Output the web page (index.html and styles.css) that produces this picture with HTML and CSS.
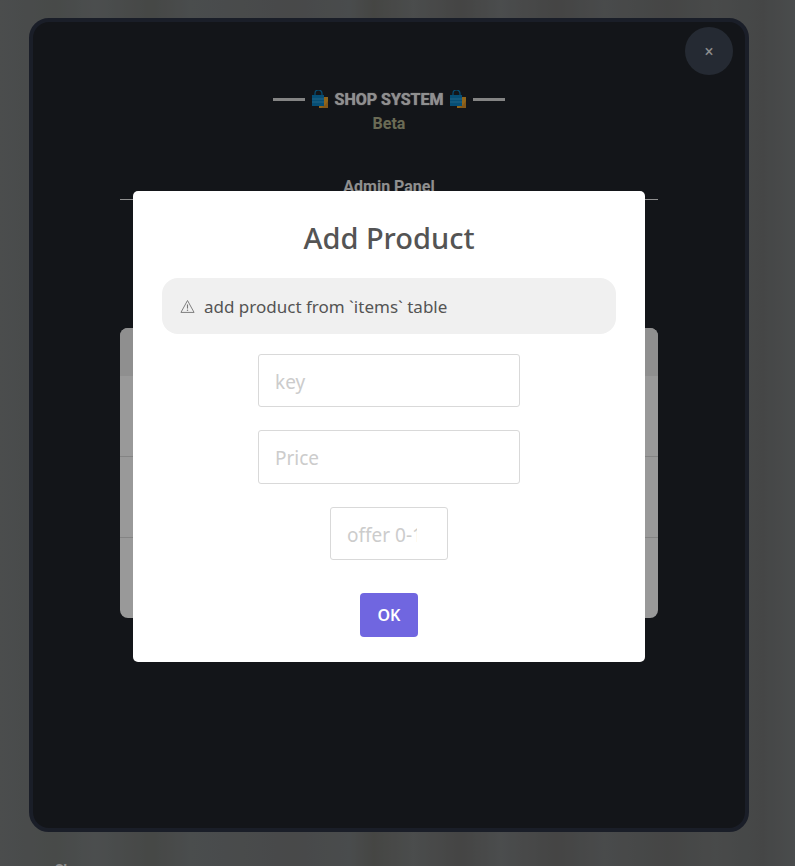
FILE: index.html
```html
<!DOCTYPE html>
<html lang="en">
<head>
  <meta charset="UTF-8" />
  <title>Shop System</title>
  <meta name="viewport" content="width=device-width, initial-scale=1" />
  <link rel="stylesheet" href="styles.css">
</head>
<body>

<div class="panel">
  <button class="close-btn" type="button">×</button>

  <div class="panel-title">
    <span class="dash"></span>
    <svg class="bag" viewBox="0 0 18 18" width="18" height="18">
      <rect x="8" y="7" width="9" height="11" fill="#f0a92e" />
      <path d="M10 18h7v-7l-3 4z" fill="#d9912a" />
      <path d="M4 5V3.5a3.5 3.5 0 0 1 7 0V5" fill="none" stroke="#0a83c4" stroke-width="1.2" />
      <rect x="1" y="5" width="12" height="11" fill="#0a83c4" />
      <path d="M1 9h12M1 12h12" stroke="#3aa6dc" stroke-width="1" />
    </svg>
    <span>SHOP SYSTEM</span>
    <svg class="bag" viewBox="0 0 18 18" width="18" height="18">
      <rect x="8" y="7" width="9" height="11" fill="#f0a92e" />
      <path d="M10 18h7v-7l-3 4z" fill="#d9912a" />
      <path d="M4 5V3.5a3.5 3.5 0 0 1 7 0V5" fill="none" stroke="#0a83c4" stroke-width="1.2" />
      <rect x="1" y="5" width="12" height="11" fill="#0a83c4" />
      <path d="M1 9h12M1 12h12" stroke="#3aa6dc" stroke-width="1" />
    </svg>
    <span class="dash"></span>
  </div>
  <div class="panel-beta">Beta</div>

  <div class="panel-sub">Admin Panel</div>
  <hr class="panel-rule" />

  <div class="table-card">
    <div class="table-head"></div>
    <div class="table-row"></div>
    <div class="table-row"></div>
    <div class="table-row last"></div>
  </div>
</div>

<div class="below">Shop</div>

<div class="overlay">
  <form class="dialog">
    <h2>Add Product</h2>
    <div class="notice">
      <svg class="warn" viewBox="0 0 16 16" width="15" height="15">
        <path d="M8 1.6 15 14.3H1z" fill="none" stroke="#777" stroke-width="1" stroke-linejoin="round" />
        <path d="M8 5.8v4.4" stroke="#777" stroke-width="1.2" />
        <circle cx="8" cy="12" r=".8" fill="#777" />
      </svg>
      <span>add product from `items` table</span>
    </div>
    <input class="field" type="text" placeholder="key" />
    <input class="field" type="text" placeholder="Price" />
    <input class="field small" type="text" placeholder="offer 0-1" />
    <button class="ok-btn" type="button">OK</button>
  </form>
</div>

</body>
</html>
```

FILE: styles.css
```css
html, body {
  height: 100%;
}
body {
  margin: 0;
  height: 866px;
  overflow: hidden;
  position: relative;
  font-family: Roboto, sans-serif;
  background-color: #7b7f80;
  background-image:
    linear-gradient(90deg, #7d8081 0, #787c7a 7%, #7e8283 12%, #757875 19%, #7c8081 24%, #787a7b 37%, #7b7f80 44%, #747571 47%, #7d8080 52%, #737372 58%, #7d8081 63%, #737372 70%, #7a7d7e 76%, #747574 84%, #797c7c 90%, #747676 96%, #7b7f80 100%);
}

.panel {
  position: relative;
  box-sizing: border-box;
  width: 720px;
  height: 814px;
  margin: 18px 0 0 29px;
  padding: 70px 87px 0;
  background: #21242a;
  border: 4px solid #2c3244;
  border-radius: 20px;
  color: #eee;
  text-align: center;
}
.close-btn {
  position: absolute;
  top: 5px;
  right: 12px;
  width: 48px;
  height: 48px;
  padding: 0;
  border: none;
  border-radius: 50%;
  background: #3e4756;
  color: #eee;
  font-family: Roboto, sans-serif;
  font-size: 16px;
}
.panel-title {
  display: flex;
  align-items: center;
  justify-content: center;
  gap: 6px;
  height: 14px;
  font-size: 16px;
  font-weight: 700;
  text-shadow: 0 0 1px #eee;
}
.dash {
  width: 32px;
  height: 3px;
  background: #ddd;
}
.panel-beta {
  margin-top: 8px;
  font-size: 16px;
  font-weight: 700;
  line-height: 20px;
  color: #b2b28e;
}
.panel-sub {
  margin-top: 43px;
  font-size: 16px;
  font-weight: 700;
  line-height: 20px;
}
.panel-rule {
  margin: 2px 0 0;
  border: none;
  border-top: 1px solid #eee;
}
.table-card {
  margin-top: 128px;
  height: 290px;
  background: #fff;
  border-radius: 8px;
  overflow: hidden;
}
.table-head {
  height: 48px;
  background: #eee;
}
.table-row {
  height: 80px;
  border-bottom: 1px solid #ddd;
}
.table-row.last {
  border-bottom: none;
}

.below {
  margin: 30px 0 0 55px;
  font-size: 14px;
  font-weight: 700;
  color: #eee;
}

.overlay {
  position: absolute;
  top: 0;
  left: 0;
  right: 0;
  bottom: 0;
  padding: 191px 17px 0 0;
  display: flex;
  justify-content: center;
  align-items: flex-start;
  background: rgba(0, 0, 0, 0.4);
}
.dialog {
  box-sizing: border-box;
  width: 512px;
  height: 471px;
  padding: 26px 29px 0;
  display: flex;
  flex-direction: column;
  align-items: center;
  background: #fff;
  border-radius: 5px;
  font-family: "Noto Sans", sans-serif;
}
.dialog h2 {
  margin: 0;
  font-size: 29px;
  font-weight: 500;
  line-height: 42px;
  color: #545454;
}
.notice {
  box-sizing: border-box;
  width: 100%;
  height: 56px;
  margin-top: 19px;
  padding: 0 18px;
  display: flex;
  align-items: center;
  gap: 9px;
  background: #f0f0f0;
  border-radius: 16px;
  font-size: 17px;
  color: #545454;
}
.field {
  box-sizing: border-box;
  width: 262px;
  height: 53px;
  margin-top: 20px;
  padding: 2px 16px 0;
  border: 1px solid #d9d9d9;
  border-radius: 3px;
  background: #fff;
  font-family: "Noto Sans", sans-serif;
  font-size: 19px;
  color: #545454;
}
.field + .field {
  margin-top: 23px;
  height: 54px;
}
.field.small {
  width: 118px;
  height: 53px;
  padding-right: 30px;
}
.field::placeholder {
  color: #ccc;
}
.ok-btn {
  width: 58px;
  height: 44px;
  margin-top: 33px;
  padding: 0;
  border: none;
  border-radius: 4px;
  background: #7066e0;
  color: #fff;
  font-family: "Noto Sans", sans-serif;
  font-size: 16px;
  font-weight: 600;
}
```
